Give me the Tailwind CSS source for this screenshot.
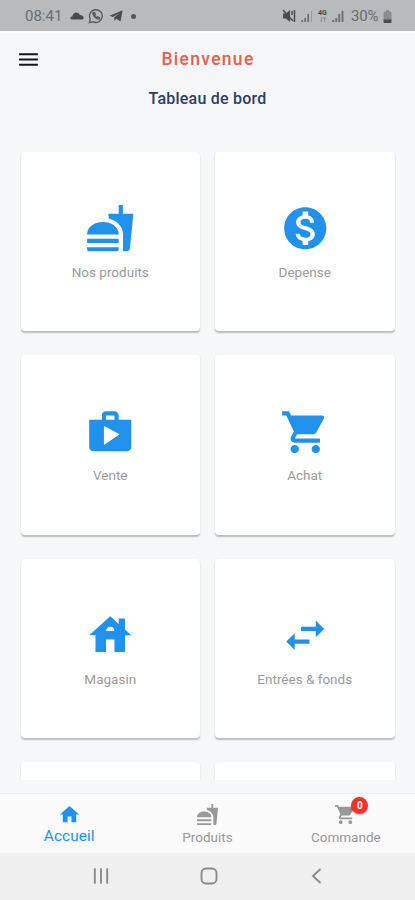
<!DOCTYPE html>
<html lang="fr">
<head>
  <meta charset="UTF-8" />
  <meta name="viewport" content="width=device-width, initial-scale=1.0" />
  <title>Tableau de bord</title>
  <script src="https://cdn.jsdelivr.net/npm/@tailwindcss/browser@4"></script>
</head>
<body class="bg-[#f5f7f9] font-['Roboto',sans-serif] w-[415px] h-[900px] overflow-hidden flex flex-col">

  <!-- Status bar -->
  <div class="h-[31px] shrink-0 bg-[#b8babc] text-[#6b6c6e] flex items-center justify-between pl-[25px] pr-[23px]">
    <div class="flex items-center pt-px">
      <span class="text-[15px] leading-none w-[38px]">08:41</span>
      <svg class="w-[14px] h-[14px] ml-[7px]" viewBox="0 0 14 14" fill="#4a4b4d"><path d="M2.4 10.5C.8 10.5.2 9.6.4 8.7.6 7.9 1.4 7.4 2.4 7.4 2.8 4.9 4.4 3.4 6.4 3.4c1.7 0 2.9 1 3.4 2.6 2.2-.1 3.8 1.2 3.8 3 0 .9-.6 1.5-1.6 1.5z"/></svg>
      <svg class="w-[16px] h-[16px] ml-[4px]" viewBox="0 0 16 16" fill="none" stroke="#5a5b5d"><path stroke-width="1.4" d="M1.4 14.6l.9-3.4A6.4 6.4 0 1 1 4.8 13.7z"/><path stroke-width="1.5" d="M5.3 4.6c-.6 1.2.2 3 1.7 4.5s3.2 2.3 4.4 1.6l.1-1-1.6-.9-.9.8C7.8 9.1 7.1 8.3 6.7 7.2l.6-.8-.8-1.7z"/></svg>
      <svg class="w-[14px] h-[14px] ml-[5px]" viewBox="0 0 14 14" fill="#4a4b4d"><path d="M.5 6.7L13.6 1.3 11.5 12.6 7.4 9.8 5.6 11.7 5.2 8.5 10.5 4 4 7.9z"/></svg>
      <span class="w-[5px] h-[5px] rounded-full bg-[#555658] ml-[8px]"></span>
    </div>
    <div class="flex items-center pt-px">
      <svg class="w-[14px] h-[14px]" viewBox="0 0 14 14"><path fill="#4a4b4d" d="M1 4.5h3L8 1v12L4 9.5H1z"/><path stroke="#4a4b4d" stroke-width="1.5" d="M1 1l10 11M12.500 1v12M10 2v4"/></svg>
      <svg class="w-[12px] h-[12px] ml-[5px]" viewBox="0 0 12 12" stroke-width="1.7"><path stroke="#6b6c6e" d="M1.2 12v-2M4.2 12V8M7.2 12V4"/><path stroke="#9a9b9d" stroke-width="1" d="M10.5 12V1"/></svg>
      <div class="flex flex-col items-center ml-[4px] w-[11px]">
        <span class="text-[7px] leading-[7px] font-bold text-[#4a4b4d]">4G</span>
        <svg class="w-[8px] h-[5px]" viewBox="0 0 8 5" fill="none" stroke="#8d8e90"><path d="M2.5 0v5M1 3.5l1.5 1.5M5.5 5V0M4 1.500L5.500 0 7 1.500"/></svg>
      </div>
      <svg class="w-[12px] h-[12px] ml-[4px]" viewBox="0 0 12 12" stroke="#6b6c6e" stroke-width="1.8"><path d="M1.2 12v-2M4.2 12V8M7.2 12V4M10.5 12V1"/></svg>
      <span class="text-[15px] leading-none ml-[7px] w-[30px] tracking-[-0.2px]">30%</span>
      <svg class="w-[9px] h-[13px] ml-[2px]" viewBox="0 0 9 13"><path fill="#8b8c8e" d="M1.5 1.5h1.5V0h3v1.5h1.5L8.500 3v7H.5V3z"/><path fill="#4a4b4d" d="M.5 9.5h8V12a1 1 0 0 1-1 1h-6a1 1 0 0 1-1-1z"/></svg>
    </div>
  </div>

  <!-- Header -->
  <header class="shrink-0 h-[120.5px] border-t-2 border-[#fbfcfd]">
    <div class="grid grid-cols-[1fr_auto_1fr] items-center h-[53px] px-[16px]">
      <svg class="w-[25px] h-[25px]" viewBox="0 0 24 24" fill="#15161a"><path d="M3 18h18v-2H3v2zm0-5h18v-2H3v2zm0-7v2h18V6H3z"/></svg>
      <h1 class="text-[17.5px] leading-none font-medium tracking-[1.3px] pl-px text-[#e8604c]">Bienvenue</h1>
    </div>
    <h2 class="text-center text-[16px] leading-[26px] font-medium tracking-[0.22px] text-[#2f3e5e]">Tableau de bord</h2>
  </header>

  <!-- Cards -->
  <main class="h-[628.5px] shrink-0 overflow-hidden px-[20.5px] grid grid-cols-2 auto-rows-[179.5px] gap-x-[15px] gap-y-[24px] text-[13.5px] text-[#9b9b9b]">
    <div class="bg-white rounded-[4px] shadow-[0_1.5px_1.5px_rgba(0,0,0,0.24)] flex flex-col items-center pt-[51.5px]">
      <svg class="w-[50.5px] h-[50.5px]" viewBox="0 0 24 24" fill="#2092ee"><path d="M18.06 22.99h1.66c.84 0 1.53-.64 1.63-1.46L23 5.05h-5V1h-1.97v4.05h-4.97l.3 2.34c1.71.47 3.31 1.32 4.27 2.26 1.44 1.42 2.43 2.89 2.43 5.29v8.05zM1 21.99V21h15.03v.99c0 .55-.45 1-1.01 1H2.01c-.56 0-1.01-.45-1.01-1zm15.03-7c0-8-15.03-8-15.03 0h15.03zM1.02 17h15v2h-15z"/></svg>
      <p class="mt-[9px] leading-[18px]">Nos produits</p>
    </div>
    <div class="bg-white rounded-[4px] shadow-[0_1.5px_1.5px_rgba(0,0,0,0.24)] flex flex-col items-center pt-[51.5px]">
      <svg class="w-[50.5px] h-[50.5px]" viewBox="0 0 24 24" fill="#2092ee"><path d="M12 2C6.48 2 2 6.48 2 12s4.48 10 10 10 10-4.48 10-10S17.52 2 12 2zm1.41 16.09V20h-2.67v-1.93c-1.71-.36-3.16-1.46-3.27-3.4h1.96c.1 1.05.82 1.87 2.65 1.87 1.96 0 2.4-.98 2.4-1.59 0-.83-.44-1.61-2.67-2.14-2.48-.6-4.18-1.62-4.18-3.67 0-1.72 1.39-2.84 3.11-3.21V4h2.67v1.95c1.86.45 2.79 1.86 2.85 3.39H14.3c-.05-1.11-.64-1.87-2.22-1.87-1.5 0-2.4.68-2.4 1.64 0 .84.65 1.39 2.67 1.91s4.18 1.39 4.18 3.91c-.01 1.83-1.38 2.83-3.12 3.16z"/></svg>
      <p class="mt-[9px] leading-[18px]">Depense</p>
    </div>
    <div class="bg-white rounded-[4px] shadow-[0_1.5px_1.5px_rgba(0,0,0,0.24)] flex flex-col items-center pt-[51.5px]">
      <svg class="w-[50.5px] h-[50.5px]" viewBox="0 0 24 24" fill="#2092ee"><path d="M16 6V4c0-1.11-.89-2-2-2h-4c-1.11 0-2 .89-2 2v2H2v13c0 1.11.89 2 2 2h16c1.11 0 2-.89 2-2V6h-6zm-6-2h4v2h-4V4zM9 18V9l7.5 4L9 18z"/></svg>
      <p class="mt-[9px] leading-[18px]">Vente</p>
    </div>
    <div class="bg-white rounded-[4px] shadow-[0_1.5px_1.5px_rgba(0,0,0,0.24)] flex flex-col items-center pt-[51.5px]">
      <svg class="w-[50.5px] h-[50.5px]" viewBox="0 0 24 24" fill="#2092ee"><path d="M7 18c-1.1 0-1.99.9-1.99 2S5.9 22 7 22s2-.9 2-2-.9-2-2-2zM1 2v2h2l3.6 7.59-1.35 2.45c-.16.28-.25.61-.25.96 0 1.1.9 2 2 2h12v-2H7.42c-.14 0-.25-.11-.25-.25l.03-.12.9-1.63h7.45c.75 0 1.41-.41 1.75-1.03l3.58-6.49c.08-.14.12-.31.12-.48 0-.55-.45-1-1-1H5.21l-.94-2H1zm16 16c-1.1 0-1.99.9-1.99 2s.89 2 1.99 2 2-.9 2-2-.9-2-2-2z"/></svg>
      <p class="mt-[9px] leading-[18px]">Achat</p>
    </div>
    <div class="bg-white rounded-[4px] shadow-[0_1.5px_1.5px_rgba(0,0,0,0.24)] flex flex-col items-center pt-[51.5px]">
      <svg class="w-[50.5px] h-[50.5px]" viewBox="0 0 24 24" fill="#2092ee"><path d="M19 9.3V4h-3v2.6L12 3 2 12h3v8h5v-6h4v6h5v-8h3l-3-2.7zm-9 .7c0-1.1.9-2 2-2s2 .9 2 2h-4z"/></svg>
      <p class="mt-[9px] leading-[18px]">Magasin</p>
    </div>
    <div class="bg-white rounded-[4px] shadow-[0_1.5px_1.5px_rgba(0,0,0,0.24)] flex flex-col items-center pt-[51.5px]">
      <svg class="w-[50.5px] h-[50.5px]" viewBox="0 0 24 24" fill="#2092ee"><path d="M6.99 11L3 15l3.99 4v-3H14v-2H6.99v-3zM21 9l-3.99-4v3H10v2h7.01v3L21 9z"/></svg>
      <p class="mt-[9px] leading-[18px]">Entrées &amp; fonds</p>
    </div>
    <div class="bg-white rounded-[4px] shadow-[0_1.5px_1.5px_rgba(0,0,0,0.24)]"></div>
    <div class="bg-white rounded-[4px] shadow-[0_1.5px_1.5px_rgba(0,0,0,0.24)]"></div>
  </main>

  <!-- Bottom navigation -->
  <nav class="mt-[13px] h-[60px] shrink-0 bg-[#fbfbfb] border-t border-[#eceef0] grid grid-cols-3 text-[13.5px] text-[#999]">
    <div class="flex flex-col items-center pt-[9px] text-[#2092ee]">
      <svg class="w-[23px] h-[23px]" viewBox="0 0 24 24" fill="currentColor"><path d="M10 20v-6h4v6h5v-8h3L12 3 2 12h3v8z"/></svg>
      <span class="text-[15.5px] leading-[20px]">Accueil</span>
    </div>
    <div class="flex flex-col items-center pt-[9px]">
      <svg class="w-[23px] h-[23px]" viewBox="0 0 24 24" fill="currentColor"><path d="M18.06 22.99h1.66c.84 0 1.53-.64 1.63-1.46L23 5.05h-5V1h-1.97v4.05h-4.97l.3 2.34c1.71.47 3.31 1.32 4.27 2.26 1.44 1.42 2.43 2.89 2.43 5.29v8.05zM1 21.99V21h15.03v.99c0 .55-.45 1-1.01 1H2.01c-.56 0-1.01-.45-1.01-1zm15.03-7c0-8-15.03-8-15.03 0h15.03zM1.02 17h15v2h-15z"/></svg>
      <span class="leading-[22px]">Produits</span>
    </div>
    <div class="flex flex-col items-center pt-[9px]">
      <div class="relative">
        <svg class="w-[23px] h-[23px]" viewBox="0 0 24 24" fill="currentColor"><path d="M7 18c-1.1 0-1.99.9-1.99 2S5.9 22 7 22s2-.9 2-2-.9-2-2-2zM1 2v2h2l3.6 7.59-1.35 2.45c-.16.28-.25.61-.25.96 0 1.1.9 2 2 2h12v-2H7.42c-.14 0-.25-.11-.25-.25l.03-.12.9-1.63h7.45c.75 0 1.41-.41 1.75-1.03l3.58-6.49c.08-.14.12-.31.12-.48 0-.55-.45-1-1-1H5.21l-.94-2H1zm16 16c-1.1 0-1.99.9-1.99 2s.89 2 1.99 2 2-.9 2-2-.9-2-2-2z"/></svg>
        <span class="absolute -top-[6px] left-[17px] w-[17px] h-[17px] rounded-full bg-[#f2322b] text-white text-[10px] font-bold flex items-center justify-center shadow-[0_1px_2px_rgba(0,0,0,0.3)]">0</span>
      </div>
      <span class="leading-[22px]">Commande</span>
    </div>
  </nav>

  <!-- Android buttons -->
  <div class="flex-1 bg-[#f0f0f0] flex items-center justify-between pl-[92px] pr-[89px] pb-[2px]">
    <svg class="w-[18px] h-[18px]" viewBox="0 0 18 18" stroke="#8a8a8a" stroke-width="1.9"><path d="M2.8 1.3v15.4M9 1.3v15.4M15.2 1.3v15.4"/></svg>
    <svg class="w-[18px] h-[18px]" viewBox="0 0 18 18" fill="none" stroke="#8a8a8a" stroke-width="1.9"><rect x="1.5" y="1.5" width="15" height="15" rx="4.5"/></svg>
    <svg class="w-[18px] h-[18px]" viewBox="0 0 18 18" fill="none" stroke="#8a8a8a" stroke-width="1.9"><path d="M12.5 2L5 9l7.5 7"/></svg>
  </div>
</body>
</html>
